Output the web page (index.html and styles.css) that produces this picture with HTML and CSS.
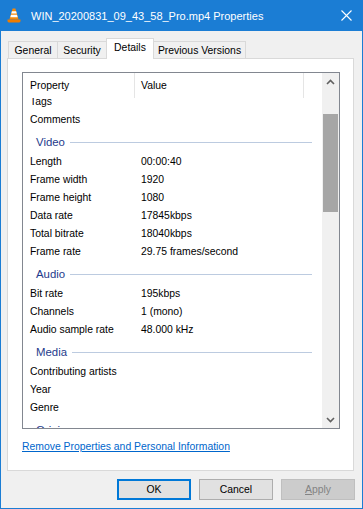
FILE: index.html
```html
<!DOCTYPE html>
<html>
<head>
    <title>WIN_20200831_09_43_58_Pro.mp4 Properties</title>
    <link rel="stylesheet" href="styles.css">
</head>
<body>
    <div class="window">
        <!-- Barra de titulo -->
        <div class="titlebar">
            <svg class="app-icon" width="14" height="15" viewBox="0 0 14 15">
                <path d="M5.6 0.5 h2.8 l3.2 11 h-9.2 z" fill="#f58a0b"/>
                <path d="M4.9 3.2 h4.2 l0.7 2.4 h-5.6 z" fill="#fff"/>
                <path d="M4.0 6.8 h6.0 l0.7 2.4 h-7.4 z" fill="#fff"/>
                <path d="M0.5 11.5 h13 v1.6 q0 1.4 -1.4 1.4 h-10.2 q-1.4 0 -1.4 -1.4 z" fill="#f07c00"/>
            </svg>
            <span class="title">WIN_20200831_09_43_58_Pro.mp4 Properties</span>
            <svg class="close" width="11" height="11" viewBox="0 0 11 11">
                <path d="M0.5 0.5 L10.5 10.5 M10.5 0.5 L0.5 10.5" stroke="#fff" stroke-width="1.1"/>
            </svg>
        </div>

        <div class="client">
            <div class="tabs">
                <div class="tab tab-general">General</div>
                <div class="tab tab-security">Security</div>
                <div class="tab tab-details selected">Details</div>
                <div class="tab tab-previous">Previous Versions</div>
            </div>

            <div class="panel">
                <div class="listview">
                    <div class="lv-main">
                        <div class="lv-header">
                            <div class="hcell hcell-prop">Property</div>
                            <div class="hcell hcell-value">Value</div>
                        </div>
                        <div class="lv-body">
                            <div class="lv-rows">
                                <div class="row"><div class="c-prop">Tags</div><div class="c-value"></div></div>
                                <div class="row"><div class="c-prop">Comments</div><div class="c-value"></div></div>

                                <div class="group"><span>Video</span><div class="group-line"></div></div>
                                <div class="row"><div class="c-prop">Length</div><div class="c-value">00:00:40</div></div>
                                <div class="row"><div class="c-prop">Frame width</div><div class="c-value">1920</div></div>
                                <div class="row"><div class="c-prop">Frame height</div><div class="c-value">1080</div></div>
                                <div class="row"><div class="c-prop">Data rate</div><div class="c-value">17845kbps</div></div>
                                <div class="row"><div class="c-prop">Total bitrate</div><div class="c-value">18040kbps</div></div>
                                <div class="row"><div class="c-prop">Frame rate</div><div class="c-value">29.75 frames/second</div></div>

                                <div class="group"><span>Audio</span><div class="group-line"></div></div>
                                <div class="row"><div class="c-prop">Bit rate</div><div class="c-value">195kbps</div></div>
                                <div class="row"><div class="c-prop">Channels</div><div class="c-value">1 (mono)</div></div>
                                <div class="row"><div class="c-prop">Audio sample rate</div><div class="c-value">48.000 kHz</div></div>

                                <div class="group"><span>Media</span><div class="group-line"></div></div>
                                <div class="row"><div class="c-prop">Contributing artists</div><div class="c-value"></div></div>
                                <div class="row"><div class="c-prop">Year</div><div class="c-value"></div></div>
                                <div class="row"><div class="c-prop">Genre</div><div class="c-value"></div></div>

                                <div class="group"><span>Origin</span><div class="group-line"></div></div>
                            </div>
                        </div>
                    </div>
                    <!-- Barra de desplazamiento -->
                    <div class="scrollbar">
                        <div class="sb-arrow">
                            <svg width="9" height="6" viewBox="0 0 9 6"><path d="M1 5 L4.5 1.5 L8 5" fill="none" stroke="#606060" stroke-width="1.6"/></svg>
                        </div>
                        <div class="sb-track">
                            <div class="sb-thumb"></div>
                        </div>
                        <div class="sb-arrow">
                            <svg width="9" height="6" viewBox="0 0 9 6"><path d="M1 1 L4.5 4.5 L8 1" fill="none" stroke="#606060" stroke-width="1.6"/></svg>
                        </div>
                    </div>
                </div>
                <a class="link" href="#">Remove Properties and Personal Information</a>
            </div>

            <div class="buttons">
                <button class="btn btn-default">OK</button>
                <button class="btn">Cancel</button>
                <button class="btn" disabled><u>A</u>pply</button>
            </div>
        </div>
    </div>
</body>
</html>
```

FILE: styles.css
```css
body {
    margin: 0;
    font-family: "Liberation Sans", Arial, sans-serif;
    font-size: 10.4px;
    color: #000;
    background-color: #fff;
}

.window {
    width: 363px;
    height: 509px;
    display: flex;
    flex-direction: column;
}

.titlebar {
    height: 31px;
    flex: none;
    background-color: #1b7dd4;
    color: #fff;
    display: flex;
    align-items: center;
}

.app-icon {
    margin-left: 7px;
    margin-right: 10px;
}

.title {
    font-size: 11px;
    flex: 1;
}

.close {
    margin-right: 11px;
}

.client {
    flex: 1;
    background-color: #f0f0f0;
    border: 1px solid #1b7dd4;
    border-top: none;
    padding: 7px 0 0 6px;
}

/* Pestañas */
.tabs {
    display: flex;
    align-items: flex-end;
    height: 20px;
    margin-left: 1px;
}

.tab {
    box-sizing: border-box;
    height: 17px;
    line-height: 17px;
    text-align: center;
    border: 1px solid #d9d9d9;
    border-bottom: none;
    background-color: #f0f0f0;
    margin-left: -1px;
}

.tab:first-child {
    margin-left: 0;
}

.tab-general { width: 50px; }
.tab-security { width: 50px; }
.tab-details { width: 48px; }
.tab-previous { width: 93px; }

.tab.selected {
    height: 21px;
    line-height: 17px;
    background-color: #fff;
    margin-bottom: -1px;
    position: relative;
    z-index: 1;
}

.panel {
    box-sizing: border-box;
    width: 347px;
    height: 413px;
    background-color: #fff;
    border: 1px solid #d9d9d9;
    padding: 13px 0 0 14px;
}

/* Lista de propiedades */
.listview {
    box-sizing: border-box;
    width: 318px;
    height: 357px;
    border: 1px solid #828790;
    display: flex;
}

.lv-main {
    flex: 1;
    display: flex;
    flex-direction: column;
    overflow: hidden;
}

.lv-header {
    height: 25px;
    flex: none;
    display: flex;
}

.hcell {
    box-sizing: border-box;
    height: 25px;
    padding-top: 1px;
    line-height: 24px;
    border-right: 1px solid #e5e5e5;
}

.hcell-prop {
    width: 112px;
    padding-left: 7px;
}

.hcell-value {
    width: 169px;
    padding-left: 6px;
}

.lv-body {
    flex: 1;
    overflow: hidden;
}

.lv-rows {
    margin-top: -5px;
}

.row {
    display: flex;
    height: 18px;
    line-height: 18px;
}

.c-prop {
    box-sizing: border-box;
    width: 111px;
    padding-left: 7px;
    white-space: nowrap;
}

.c-value {
    padding-left: 7px;
    white-space: nowrap;
}

.group {
    box-sizing: border-box;
    height: 24px;
    padding: 2px 10px 0 13px;
    display: flex;
    align-items: center;
    color: #1e3a8c;
    font-size: 11.4px;
}

.group-line {
    flex: 1;
    height: 1px;
    margin-left: 5px;
    background-color: #bccbe0;
}

.scrollbar {
    width: 17px;
    flex: none;
    background-color: #f0f0f0;
    display: flex;
    flex-direction: column;
}

.sb-arrow {
    height: 17px;
    display: flex;
    align-items: center;
    justify-content: center;
}

.sb-track {
    flex: 1;
    padding-top: 24px;
}

.sb-thumb {
    height: 98px;
    margin: 0 1px;
    background-color: #a6a6a6;
}

.link {
    display: block;
    margin-top: 11px;
    margin-left: 0;
    color: #0066cc;
    text-decoration: underline;
    line-height: 14px;
}

/* Botones */
.buttons {
    display: flex;
    justify-content: flex-end;
    gap: 8px;
    margin-top: 8px;
    padding-right: 7px;
}

.btn {
    box-sizing: border-box;
    width: 74px;
    height: 21px;
    padding: 0;
    font-family: "Liberation Sans", Arial, sans-serif;
    font-size: 10.4px;
    color: #000;
    background-color: #e1e1e1;
    border: 1px solid #adadad;
}

.btn-default {
    border-color: #0078d7;
    box-shadow: inset 0 0 0 1px #0078d7;
}

.btn:disabled {
    background-color: #cccccc;
    border-color: #bfbfbf;
    color: #838383;
}
```
